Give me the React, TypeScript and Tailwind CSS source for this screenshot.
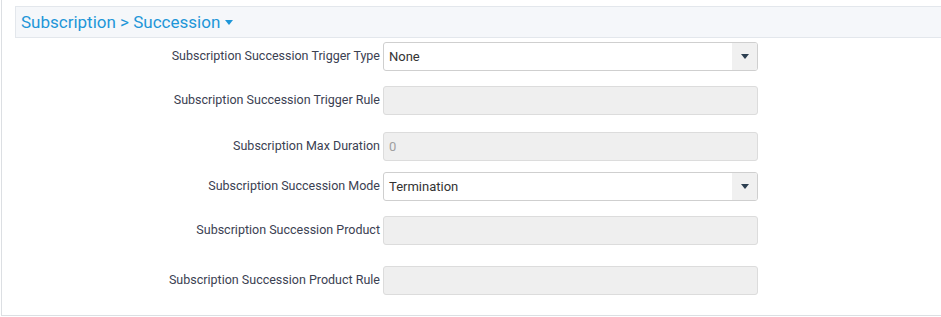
import React from "react";

const Caret = ({ className }: { className?: string }) => (
  <svg width="8" height="6" viewBox="0 0 8 6" className={className}>
    <path d="M0 0 L8 0 L4 5 Z" fill="currentColor" />
  </svg>
);

function SelectBox({ value }: { value: string }) {
  return (
    <div className="ml-[3px] flex h-[29px] w-[375px] items-stretch overflow-hidden rounded-[3px] border border-[#cfcfcf] bg-white">
      <div className="flex flex-1 items-center pl-[5px] text-[13px] text-[#333]">{value}</div>
      <div className="flex w-[25px] items-center justify-center bg-[#f0f0f0]">
        <Caret className="text-[#2c3e50]" />
      </div>
    </div>
  );
}

function TextBox({ value }: { value?: string }) {
  return (
    <div className="ml-[3px] flex h-[29px] w-[375px] items-center rounded-[3px] border border-[#dcdcdc] bg-[#efefef] pl-[5px] text-[13px] text-[#a0a0a0]">
      {value}
    </div>
  );
}

function Row({ label, children, mt }: { label: string; children: React.ReactNode; mt: string }) {
  return (
    <div className={`flex items-center ${mt}`}>
      <div className="w-[378px] text-right text-[12.5px] text-[#3b4152]">{label}</div>
      {children}
    </div>
  );
}

export default function App() {
  return (
    <div className="h-[317px] w-[941px] overflow-hidden bg-white" style={{ fontFamily: "Roboto, 'Liberation Sans', sans-serif" }}>
      <div className="ml-[1px] h-[316px] border-b border-l border-[#dcdfe3] pt-[6px]">
        <div className="ml-[13px] flex h-[32px] items-center border border-r-0 border-[#e3e7ec] bg-[#f5f7fa] pl-[5px] pt-[1px]">
          <span className="text-[17px] text-[#1e96d8]">Subscription &gt; Succession</span>
          <Caret className="ml-[5px] mt-[1px] text-[#1e96d8]" />
        </div>
        <Row label="Subscription Succession Trigger Type" mt="mt-[4px]">
          <SelectBox value="None" />
        </Row>
        <Row label="Subscription Succession Trigger Rule" mt="mt-[15px]">
          <TextBox />
        </Row>
        <Row label="Subscription Max Duration" mt="mt-[17px]">
          <TextBox value="0" />
        </Row>
        <Row label="Subscription Succession Mode" mt="mt-[11px]">
          <SelectBox value="Termination" />
        </Row>
        <Row label="Subscription Succession Product" mt="mt-[15px]">
          <TextBox />
        </Row>
        <Row label="Subscription Succession Product Rule" mt="mt-[21px]">
          <TextBox />
        </Row>
      </div>
    </div>
  );
}
